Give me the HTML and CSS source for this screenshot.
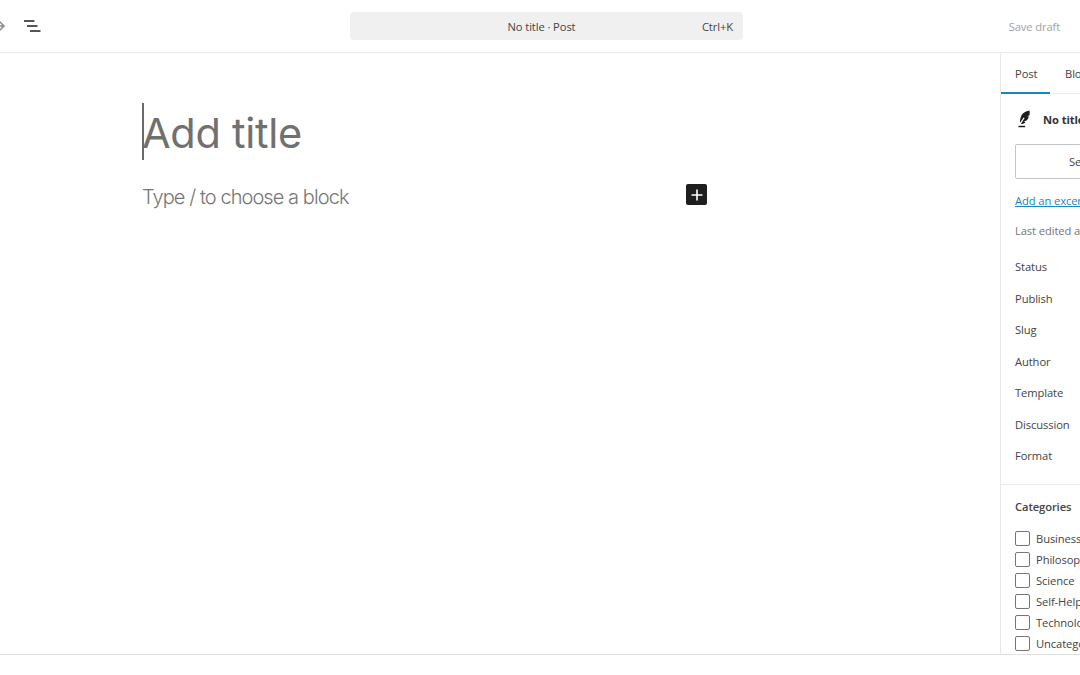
FILE: index.html
```html
<!DOCTYPE html>
<html lang="en">
<head>
<meta charset="utf-8">
<title>No title · Post</title>
<link rel="stylesheet" href="styles.css">
</head>
<body>
<div class="page">
  <header class="topbar">
    <div class="tools">
      <svg class="redo" width="24" height="24" viewBox="0 0 24 24"><path d="M15.600 6.500l5.500 5.500-5.500 5.500-1.100-1.100 3.700-3.700H4v-1.500h14.200l-3.700-3.600z"/></svg>
      <svg class="outline" width="24" height="24" viewBox="0 0 24 24"><path d="M4 6.250h10.500v1.500H4zM7 11.250h10.500v1.500H7zM10 16.250h10.500v1.500H10z"/></svg>
    </div>
    <div class="command">
      <span class="command-title">No title · Post</span>
      <span class="command-key">Ctrl+K</span>
    </div>
    <div class="actions"><span class="save">Save draft</span></div>
  </header>
  <div class="main">
    <section class="editor">
      <div class="canvas">
        <div class="title"><span class="caret"></span><span class="title-text">Add title</span></div>
        <div class="block-row">
          <span class="placeholder">Type / to choose a block</span>
          <span class="inserter"><svg width="14" height="14" viewBox="0 0 14 14"><path d="M6.200 1.500h1.600v4.700h4.700v1.600H7.800v4.700H6.200V7.800H1.500V6.200h4.700z"/></svg></span>
        </div>
      </div>
    </section>
    <aside class="sidebar">
      <div class="tabs">
        <span class="tab active">Post</span>
        <span class="tab">Block</span>
      </div>
      <div class="summary">
        <div class="post-card">
          <svg class="feather" width="24" height="24" viewBox="0 0 24 24"><path d="M18.500 3.500c-4.200.2-8 2.200-9.500 5.900-.9 2.200-1.100 4.400-1 6.400l3.600-5.300 1 .6-3.700 5.900c1.800.1 3.600-.5 4.700-2.100l-1.900-.2 3.200-1.400c1-1.100 1.700-2.500 2-3.900l-1.700-.1 2.200-1c.4-1.600.5-3.200.1-4.800zM6.500 18.800h6.500v1.400H6.500z"/></svg>
          <span class="post-name">No title</span>
        </div>
        <button class="search-btn" type="button">Set featured image</button>
        <a class="excerpt" href="#">Add an excerpt</a>
        <div class="edited">Last edited a few seconds ago</div>
      </div>
      <ul class="meta">
        <li>Status</li>
        <li>Publish</li>
        <li>Slug</li>
        <li>Author</li>
        <li>Template</li>
        <li>Discussion</li>
        <li>Format</li>
      </ul>
      <div class="categories">
        <h2>Categories</h2>
        <label class="cat"><span class="box"></span>Business</label>
        <label class="cat"><span class="box"></span>Philosophy</label>
        <label class="cat"><span class="box"></span>Science</label>
        <label class="cat"><span class="box"></span>Self-Help</label>
        <label class="cat"><span class="box"></span>Technology</label>
        <label class="cat"><span class="box"></span>Uncategorized</label>
      </div>
    </aside>
  </div>
</div>
</body>
</html>
```

FILE: styles.css
```css
* { box-sizing: border-box; }
html, body { margin: 0; padding: 0; background: #fff; }
body { width: 1080px; height: 675px; overflow: hidden; font-family: "Open Sans", "Noto Sans", sans-serif; color: #1e1e1e; }
.page { width: 1080px; height: 655px; display: flex; flex-direction: column; border-bottom: 1px solid #e0e0e0; overflow: hidden; }
.topbar { height: 53px; flex: none; display: grid; grid-template-columns: 350px 393px 1fr; align-items: center; border-bottom: 1px solid #e8e8e8; }
.tools { display: flex; align-items: center; gap: 12px; margin-left: -16px; }
.redo { fill: #8a8a8a; }
.outline { fill: #1e1e1e; }
.command { height: 28px; margin-top: -1px; background: #f0f0f0; border-radius: 4px; display: flex; align-items: center; position: relative; justify-content: center; font-size: 11.200px; letter-spacing: -.1px; color: #444; }
.command-title { margin-left: -10px; margin-top: 1px; }
.command-key { position: absolute; right: 10px; top: 7px; }
.actions { display: flex; justify-content: flex-end; padding-right: 20px; }
.save { font-size: 11.200px; letter-spacing: -.12px; color: #a2a2a2; margin-top: 1px; }
.main { flex: 1; display: flex; min-height: 0; }
.editor { width: 1000px; flex: none; padding: 50px 0 0 142px; }
.canvas { width: 565px; }
.title { font-family: Inter, "Noto Sans", sans-serif; font-size: 41.500px; font-weight: 400; color: #707070; height: 57px; line-height: 57px; position: relative; letter-spacing: -.3px; }
.title-text { position: relative; top: 2px; }
.caret { position: absolute; left: 0; top: 0; width: 1.500px; height: 57px; background: #6a6a6a; }
.block-row { margin-top: 20px; display: flex; justify-content: space-between; align-items: flex-start; }
.placeholder { font-family: Inter, "Noto Sans", sans-serif; font-weight: 300; font-size: 20px; line-height: 36px; color: #767676; letter-spacing: -.93px; margin-top: -1px; }
.inserter { width: 21px; height: 21px; margin: 4px 0 0; background: #1e1e1e; border-radius: 2px; display: flex; align-items: center; justify-content: center; }
.inserter svg { fill: #fff; }
.sidebar { width: 320px; flex: none; border-left: 1px solid #e8e8e8; overflow: hidden; font-size: 11.200px; letter-spacing: -.1px; }
.tabs { height: 41px; display: flex; border-bottom: 1px solid #ececec; }
.tab { width: 49px; line-height: 42px; padding-left: 14px; color: #444; white-space: nowrap; }
.tab.active { box-shadow: inset 0 -2px 0 #1a86c0; margin-bottom: -1px; }
.tab + .tab { padding-left: 15px; }
.summary { padding: 0 14px; }
.post-card { display: flex; align-items: center; height: 24px; margin-top: 13px; gap: 7px; margin-left: -3px; }
.feather { fill: #1e1e1e; flex: none; }
.post-name { font-weight: 700; color: #333; margin-top: 0; }
.search-btn { display: block; width: 292px; height: 35px; margin-top: 13px; padding: 0 0 0 53px; text-align: left; background: #fff; border: 1px solid #c4c4c4; border-radius: 2px; font: 11.200px "Open Sans", sans-serif; letter-spacing: -.1px; color: #444; white-space: nowrap; }
.excerpt { display: block; margin-top: 13px; line-height: 18px; color: #1a86c0; text-decoration: underline; white-space: nowrap; }
.edited { margin-top: 12px; line-height: 18px; color: #757575; white-space: nowrap; }
.meta { list-style: none; margin: 11px 0 0; padding: 0 14px 12px; color: #444; border-bottom: 1px solid #ececec; }
.meta li { height: 31.500px; line-height: 31.500px; }
.categories { padding: 13px 14px 0; }
.categories h2 { margin: 0 0 12px; font-size: 11.200px; font-weight: 600; line-height: 18px; color: #444; }
.cat { display: flex; align-items: center; height: 21px; color: #444; white-space: nowrap; }
.box { width: 15px; height: 15px; flex: none; margin-right: 6px; border: 1px solid #757575; border-radius: 2px; background: #fff; }
```
